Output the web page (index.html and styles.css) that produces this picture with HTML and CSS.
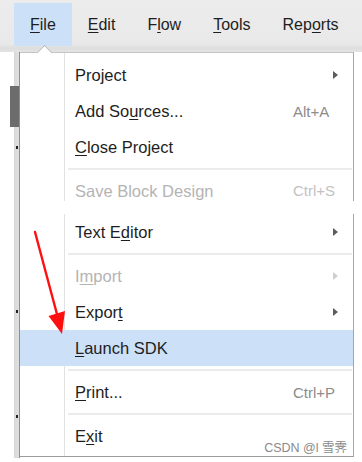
FILE: index.html
```html
<!DOCTYPE html>
<html lang="en">
<head>
  <meta charset="UTF-8">
  <meta name="viewport" content="width=device-width, initial-scale=1.0">
  <title>File menu</title>
  <link rel="stylesheet" href="styles.css">
</head>
<body>
  <!-- 메뉴 바 -->
  <div class="menubar">
    <span class="menu-item active"><u>F</u>ile</span>
    <span class="menu-item"><u>E</u>dit</span>
    <span class="menu-item">F<u>l</u>ow</span>
    <span class="menu-item"><u>T</u>ools</span>
    <span class="menu-item">Rep<u>o</u>rts</span>
  </div>

  <div class="workspace">
    <div class="gutter">
      <div class="gutter-block"></div>
      <div class="gutter-dot dot-1"></div>
      <div class="gutter-dot dot-2"></div>
      <div class="gutter-dot dot-3"></div>
    </div>

    <!-- 드롭다운 -->
    <div class="dropdown">
      <div class="section section-top">
        <div class="row"><span class="label">Project</span><span></span><span class="arrow"></span></div>
        <div class="row"><span class="label">Add So<u>u</u>rces...</span><span class="shortcut">Alt+A</span><span></span></div>
        <div class="row"><span class="label"><u>C</u>lose Project</span><span></span><span></span></div>
        <div class="separator"></div>
        <div class="row disabled cut"><span class="label">Save Block Design</span><span class="shortcut">Ctrl+S</span><span></span></div>
      </div>

      <div class="section-gap"></div>

      <div class="section section-bottom">
        <div class="row"><span class="label">Text E<u>d</u>itor</span><span></span><span class="arrow"></span></div>
        <div class="separator"></div>
        <div class="row disabled"><span class="label">I<u>m</u>port</span><span></span><span class="arrow"></span></div>
        <div class="row"><span class="label">Expor<u>t</u></span><span></span><span class="arrow"></span></div>
        <div class="row selected"><span class="label"><u>L</u>aunch SDK</span><span></span><span></span></div>
        <div class="separator"></div>
        <div class="row"><span class="label"><u>P</u>rint...</span><span class="shortcut">Ctrl+P</span><span></span></div>
        <div class="separator"></div>
        <div class="row"><span class="label">E<u>x</u>it</span><span></span><span></span></div>
      </div>
    </div>
  </div>

  <!-- 빨간 화살표 -->
  <svg class="pointer" width="362" height="462" viewBox="0 0 362 462">
    <line x1="35" y1="232" x2="58" y2="318" stroke="#ff1010" stroke-width="2.4" stroke-linecap="round"/>
    <polygon points="62,334 48.5,316 65,311" fill="#ff1010"/>
  </svg>

  <div class="watermark">CSDN @l 雪霁</div>
</body>
</html>
```

FILE: styles.css
```css
body {
  margin: 0;
  padding: 0;
  background: white;
  color: #1e1e1e;
  font-family: 'Liberation Sans', Arial, sans-serif;
  width: 362px;
  height: 462px;
  overflow: hidden;
  position: relative;
}

u {
  text-decoration-thickness: 1px;
  text-underline-offset: 2px;
}

.menubar {
  display: flex;
  height: 52px;
  padding: 3px 0 0 14px;
  box-sizing: border-box;
  background: linear-gradient(to bottom, #ececec 0, #e9e9e9 44px, #dedede 48px, #e4e4e4 52px);
  font-size: 16px;
}

.menu-item {
  height: 43px;
  line-height: 43px;
  padding: 0 16px;
}

.menu-item.active {
  background: #cce0f8;
}

.workspace {
  display: flex;
}

.gutter {
  width: 19px;
  height: 406px;
  display: flex;
  flex-direction: column;
  align-items: flex-end;
  background: linear-gradient(to right, white 14px, #d8d8d8 14px, #e0e0e0 19px);
}

.gutter-block {
  margin-top: 34px;
  width: 9px;
  height: 41px;
  background: #6c6c6c;
}

.gutter-dot {
  width: 2px;
  height: 3px;
  margin-right: 1px;
  background: #222;
}

.dot-1 { margin-top: 19px; }
.dot-2 { margin-top: 161px; }
.dot-3 { margin-top: 102px; }

.dropdown {
  width: 335px;
  box-sizing: border-box;
  border-left: 1px solid #8e8e8e;
  position: relative;
  font-size: 16.5px;
}

/* 메뉴 꼭지 */
.dropdown::before {
  content: '';
  position: absolute;
  left: 19px;
  top: -5px;
  width: 10px;
  height: 10px;
  background: white;
  border-top: 1px solid #bdbdbd;
  border-left: 1px solid #bdbdbd;
  transform: rotate(45deg);
}

.section {
  border-right: 1px solid #a6a6a6;
  background: linear-gradient(to right, transparent 44px, #e2e2e2 44px, #e2e2e2 45px, transparent 45px);
}

.section-top {
  border-top: 1px solid #c4c4c4;
  padding-top: 4px;
}

.section-bottom {
  padding-bottom: 2px;
  border-bottom: 1px solid #9c9c9c;
}

.section-gap {
  height: 13px;
}

.row {
  display: grid;
  grid-template-columns: 1fr 40px 20px;
  align-items: center;
  height: 36px;
  padding-left: 55px;
}

.row.cut {
  height: 28px;
  overflow: hidden;
  align-items: start;
  line-height: 36px;
}

.row.selected {
  background: #cce0f8;
}

.row.disabled {
  color: #b4b4b4;
}

.shortcut {
  color: #8c8c8c;
  font-size: 15px;
}

.row.disabled .shortcut {
  color: #c2c2c2;
}

.arrow {
  width: 0;
  height: 0;
  border-left: 5px solid #5c5c5c;
  border-top: 4px solid transparent;
  border-bottom: 4px solid transparent;
}

.row.disabled .arrow {
  border-left-color: #cfcfcf;
}

.separator {
  height: 2px;
  margin: 3px 1px 3px 48px;
  background: #ebebeb;
}

.pointer {
  position: absolute;
  left: 0;
  top: 0;
  pointer-events: none;
}

.watermark {
  position: absolute;
  right: 15px;
  top: 437px;
  font-size: 12.5px;
  color: #8a8a8a;
  font-family: 'Liberation Sans', 'Noto Sans CJK SC', sans-serif;
}
```
